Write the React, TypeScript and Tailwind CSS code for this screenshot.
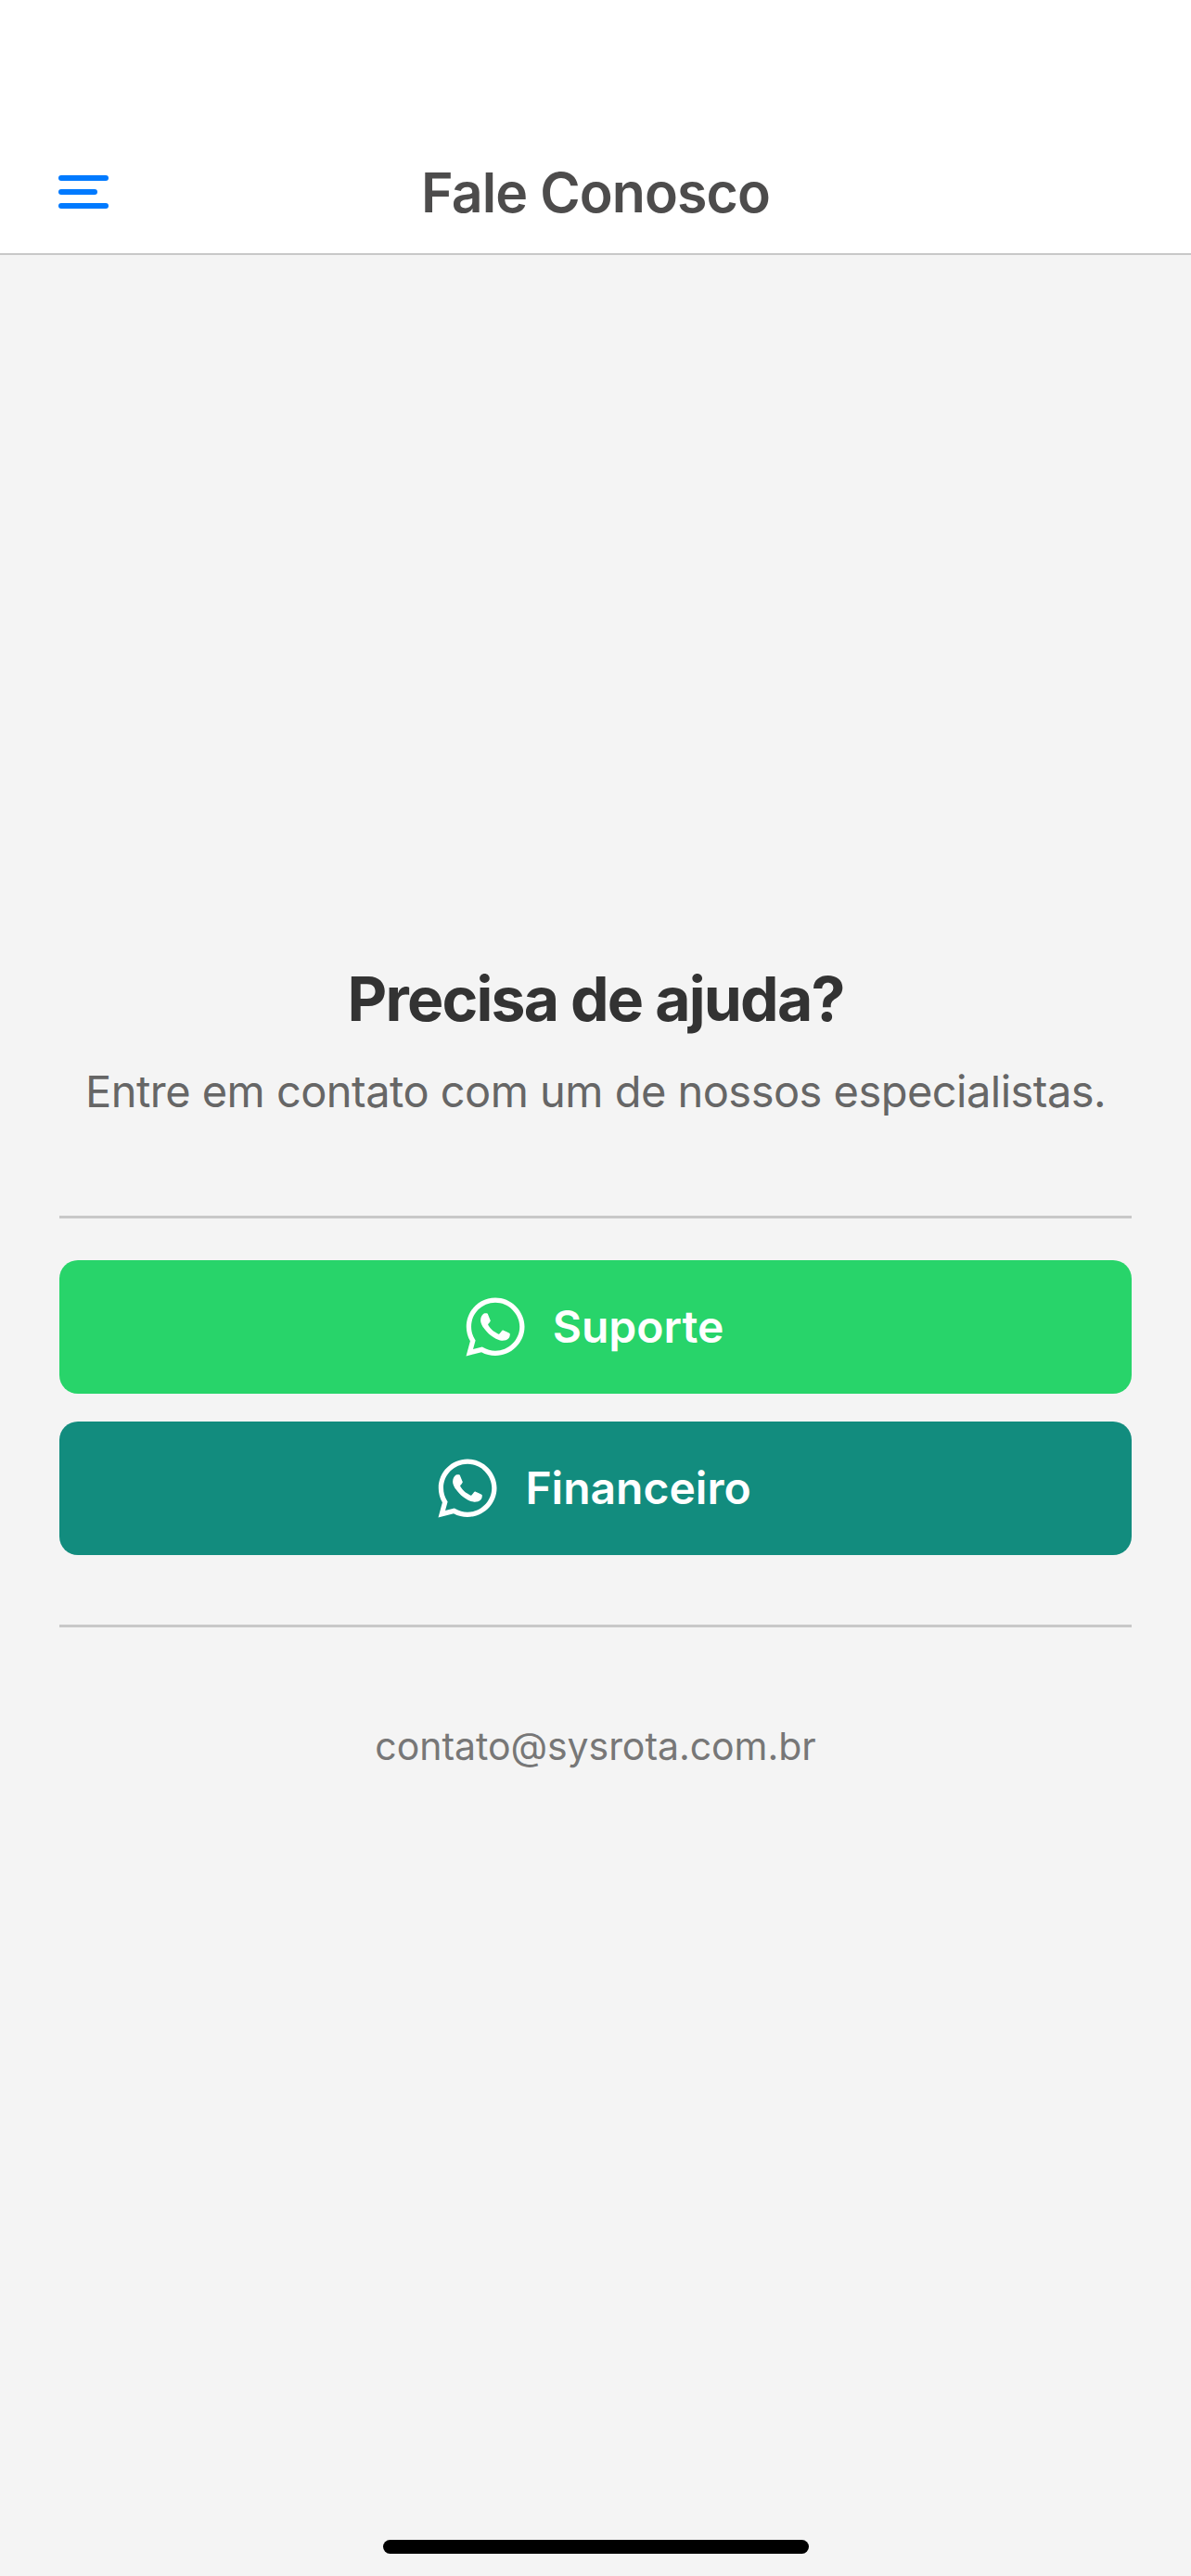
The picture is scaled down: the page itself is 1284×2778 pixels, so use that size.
import React from "react";
import { FaWhatsapp } from "react-icons/fa";

const font = { fontFamily: '"Inter", "Liberation Sans", sans-serif' };

const ContactButton = ({ label, className }: { label: string; className: string }) => (
  <button className={`flex h-[144px] w-full items-center justify-center gap-[26px] rounded-[20px] pr-[6px] text-white ${className}`}>
    <FaWhatsapp className="h-[72px] w-[72px]" />
    <span className="text-[48px] leading-none font-semibold">{label}</span>
  </button>
);

const App = () => {
  return (
    <div className="flex h-[2778px] w-[1284px] flex-col bg-[#f4f4f4]" style={font}>
      <header className="relative flex h-[275px] shrink-0 items-end justify-center border-b-[2px] border-[#c8c8c8] bg-white pb-[30px]">
        <div className="absolute top-[189px] left-[63px] flex w-[54px] flex-col gap-[9px]">
          <div className="h-[6px] w-[54px] rounded-full bg-[#007aff]" />
          <div className="h-[6px] w-[42px] rounded-full bg-[#007aff]" />
          <div className="h-[6px] w-[54px] rounded-full bg-[#007aff]" />
        </div>
        <h1 className="text-[59px] leading-[70px] font-semibold tracking-[-0.9px] text-[#4d4c4c]">Fale Conosco</h1>
      </header>

      <main className="flex flex-col px-[64px] pt-[764px]">
        <h2 className="text-center text-[66px] leading-[76px] font-bold tracking-[-1.8px] text-[#333333]">Precisa de ajuda?</h2>
        <p className="mt-[34px] text-center text-[47px] leading-[56px] tracking-[-0.53px] text-[#666666]">
          Entre em contato com um de nossos especialistas.
        </p>
        <div className="mt-[106px] h-[3px] bg-[#c8c8c8]" />
        <div className="mt-[45px] flex flex-col gap-[30px]">
          <ContactButton label="Suporte" className="bg-[#28d46a]" />
          <ContactButton label="Financeiro" className="bg-[#128c7e]" />
        </div>
        <div className="mt-[75px] h-[3px] bg-[#c8c8c8]" />
        <p className="mt-[103px] text-center text-[41px] leading-[50px] tracking-[-0.05px] text-[#777777]">contato@sysrota.com.br</p>
      </main>

      <div className="absolute top-[2739px] left-[413px] h-[15px] w-[459px] rounded-full bg-black" />
    </div>
  );
};

export default App;
